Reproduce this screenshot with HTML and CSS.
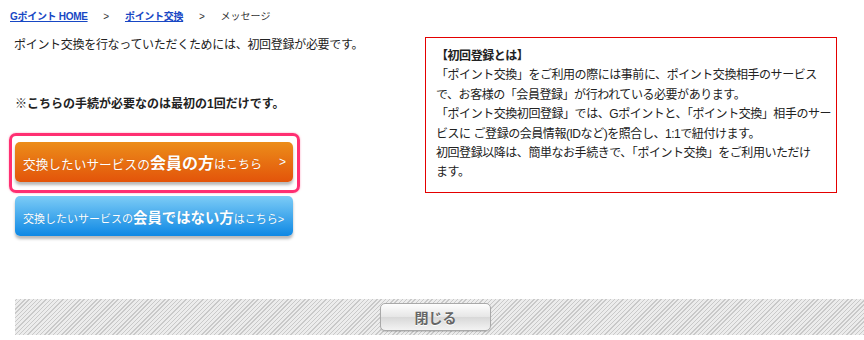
FILE: index.html
```
<!DOCTYPE html>
<html lang="ja">
<head>
	<meta charset="UTF-8">
	<meta name="viewport" content="width=device-width, initial-scale=1.0">
	<title>ポイント交換 メッセージ</title>
	<link rel="stylesheet" href="styles.css">
</head>
<body>

	<div class="crumbs">
		<a href="#">Gポイント HOME</a>
		<span class="crumbs__sep">&gt;</span>
		<a href="#">ポイント交換</a>
		<span class="crumbs__sep">&gt;</span>
		<span>メッセージ</span>
	</div>

	<div class="main">
		<div class="main__left">
			<p class="lead">ポイント交換を行なっていただくためには、初回登録が必要です。</p>
			<p class="note">※こちらの手続が必要なのは最初の1回だけです。</p>

			<div class="focus">
				<a href="#" class="btn btn--orange">
					<span class="btn__label"><span class="sm">交換したいサービスの</span><b class="lg">会員の方</b><span class="xs">はこちら</span></span>
					<span class="btn__arrow">&gt;</span>
				</a>
			</div>

			<a href="#" class="btn btn--blue">
				<span class="btn__label"><span class="sm">交換したいサービスの</span><b class="lg">会員ではない方</b><span class="xs">はこちら&gt;</span></span>
			</a>
		</div>

		<div class="info">
			<b>【初回登録とは】</b><br>
			「ポイント交換」をご利用の際には事前に、ポイント交換相手のサービス<br>
			で、お客様の「会員登録」が行われている必要があります。<br>
			「ポイント交換初回登録」では、Gポイントと、「ポイント交換」相手のサー<br>
			ビスに ご登録の会員情報(IDなど)を照合し、1:1で紐付けます。<br>
			初回登録以降は、簡単なお手続きで、「ポイント交換」をご利用いただけ<br>
			ます。
		</div>
	</div>

	<div class="closebar">
		<button class="closebar__btn">閉じる</button>
	</div>

</body>
</html>
```

FILE: styles.css
```
* {
    margin: 0;
    padding: 0;
    box-sizing: border-box;
}

body {
    font-family: "Liberation Sans", "Noto Sans CJK JP", sans-serif;
    font-size: 12px;
    color: #222;
    background: #fff;
    overflow: hidden;
}

.crumbs {
    padding: 10px 0 0 10px;
    font-size: 10px;
    line-height: 14px;
    color: #333;
    white-space: nowrap;
}

.crumbs a {
    color: #1747c4;
    font-weight: bold;
    text-decoration: underline;
    letter-spacing: -0.3px;
}

.crumbs__sep {
    margin: 0 13px;
}

.main {
    display: flex;
    margin-top: 13px;
    padding-left: 9px;
}

.main__left {
    width: 416px;
}

.lead {
    padding-left: 5px;
    line-height: 16px;
    letter-spacing: -0.3px;
}

.note {
    margin-top: 43px;
    padding-left: 6px;
    line-height: 16px;
    font-weight: bold;
    color: #222;
}

.focus {
    width: 291px;
    margin-top: 21px;
    padding: 6px 4px 8px 3px;
    border: 3px solid #ff2f72;
    border-radius: 7px;
    box-shadow: 0 0 2px rgba(255, 47, 114, 0.5);
}

.btn {
    display: flex;
    justify-content: space-between;
    align-items: center;
    width: 278px;
    height: 40px;
    padding: 0 7px 0 8px;
    border-radius: 5px;
    color: #fff;
    text-decoration: none;
    white-space: nowrap;
    box-shadow: 0 3px 3px rgba(0, 0, 0, 0.28);
    text-shadow: 0 0 1px rgba(0, 0, 0, 0.15);
}

.btn--orange {
    background: linear-gradient(#ec8d1a, #e3540a);
}

.btn--orange .sm {
    font-size: 12.7px;
}

.btn--orange .lg {
    font-size: 16px;
}

.btn--orange .xs {
    font-size: 12px;
}

.btn__arrow {
    font-size: 12px;
}

.btn--blue {
    margin: 3px 0 0 6px;
    background: linear-gradient(#7dccf6, #0e88e4);
}

.btn--blue .sm {
    font-size: 11px;
}

.btn--blue .lg {
    font-size: 14.4px;
}

.btn--blue .xs {
    font-size: 11px;
}

.info {
    width: 412px;
    height: 156px;
    padding: 9px 0 0 10px;
    border: 1px solid #e40000;
    line-height: 19.4px;
    letter-spacing: -0.45px;
    white-space: nowrap;
    color: #222;
}

.closebar {
    display: flex;
    justify-content: center;
    height: 36px;
    margin: 63px 0 0 15px;
    padding: 4px 0 0 0;
    background: repeating-linear-gradient(-45deg, #c9c9c9 0 1px, #ececec 1px 3px);
}

.closebar__btn {
    width: 111px;
    height: 28px;
    margin-right: 8px;
    border: 1px solid #a9a9a9;
    border-radius: 5px;
    background: linear-gradient(#fdfdfd, #e6e6e6 50%, #d8d8d8 51%, #f3f3f3);
    font-family: "Liberation Sans", "Noto Sans CJK JP", sans-serif;
    font-size: 14px;
    font-weight: bold;
    color: #666;
    text-shadow: 0 1px 0 #fff;
    box-shadow: 0 1px 1px rgba(0, 0, 0, 0.15);
}
```
